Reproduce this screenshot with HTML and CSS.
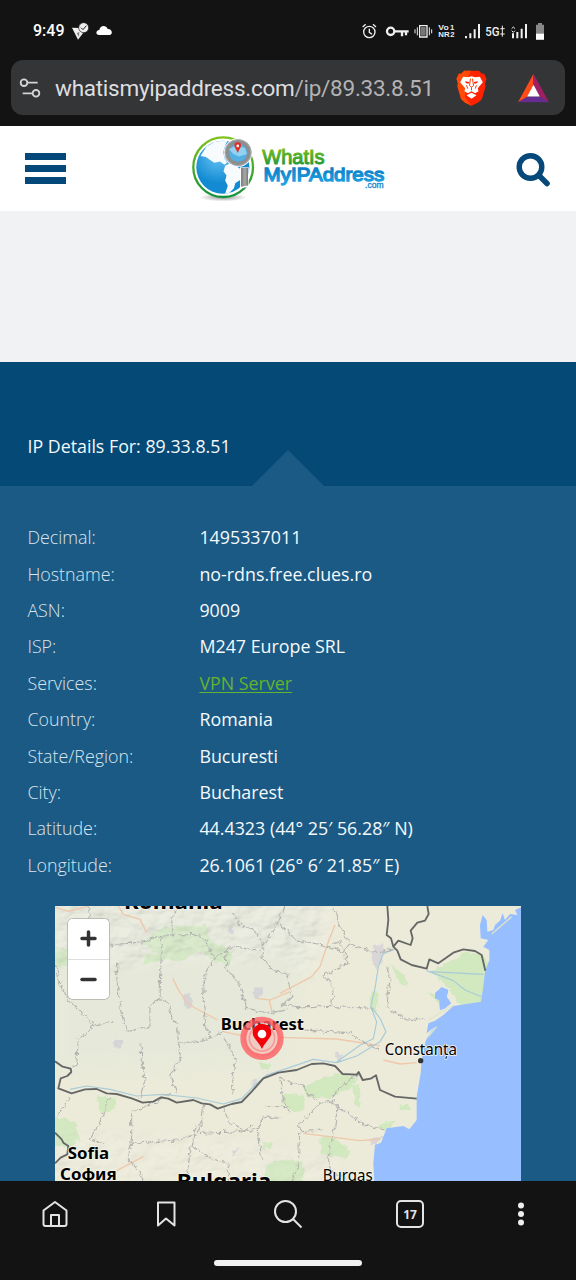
FILE: index.html
```html
<!DOCTYPE html>
<html lang="en">
<head>
<meta charset="utf-8">
<title>IP Details</title>
<link rel="stylesheet" href="styles.css">
</head>
<body>
<div class="phone">
  <header class="chrome">
    <div class="status">
      <span class="clock">9:49</span>
      <svg class="status-left" viewBox="210 60 135 66"><path d="M216 83L238 84 250 98 234 119Z" fill="#eee"/><path d="M230 100l8-5-1 16z" fill="#888"/><circle cx="251" cy="83" r="15" fill="#eee" stroke="#131313" stroke-width="2"/><path d="M243 83l6 6 10-12" fill="none" stroke="#222" stroke-width="3"/><path d="M297 105c-10 0-11-14 1-15 2-14 20-16 25-3 14-2 17 18 5 18z" fill="#fff"/></svg>
      <svg class="status-right" viewBox="219 60 555 66" fill="none" stroke="#f0f0f0">
        <circle cx="244" cy="96" r="17" stroke-width="4"/><path d="M244 86v11l8 6M224 81l9-8M264 81l-9-8" stroke-width="4"/>
        <circle cx="308" cy="94" r="11" stroke-width="7"/><path d="M319 94h43M342 94v15M354 94v12" stroke-width="7"/>
        <path d="M395 77h22v34h-22z" stroke-width="4"/><path d="M399 81h14v26h-14z" fill="#777" stroke="none"/><path d="M388 82v24M381 88v12M424 82v24M431 88v12" stroke-width="3"/>
        <g fill="#eee" stroke="none" class="tiny"><text x="451" y="91" textLength="31" lengthAdjust="spacingAndGlyphs">Vo</text><text x="486" y="89">1</text><text x="451" y="112" textLength="34" lengthAdjust="spacingAndGlyphs">NR</text><text x="487" y="112">2</text></g>
        <path d="M534 108v7M547 100v15M560 88v27M573 72v43" stroke-width="6"/>
        <text x="592" y="109" class="fiveg" fill="#eee" stroke="none" textLength="43" lengthAdjust="spacingAndGlyphs">5G</text><path d="M643 77v33M637 86h13M637 102h13" stroke-width="3"/>
        <path d="M675 100v15M688 96v19M701 86v29M714 72v43" stroke-width="6"/><path d="M671 86l5-5 5 5M671 92l5 5 5-5" stroke-width="3"/>
        <path d="M744 74h6v-5h12v5h6v45h-24z" fill="#888" stroke="none"/><path d="M744 101h24v18h-24z" fill="#fff" stroke="none"/>
      </svg>
    </div>
    <div class="address">
      <svg class="tune" viewBox="57 230 66 66" fill="none" stroke="#d4d4d6" stroke-width="5.500"><circle cx="72" cy="247" r="10"/><path d="M83 247h30M68 279h28"/><circle cx="108" cy="279" r="10"/></svg>
      <span class="url">whatismyipaddress.com<span class="path">/ip/89.33.8.51</span></span>
      <svg class="brave" viewBox="504 208 92 108"><path d="M528 210h44l9 9h7l7 15-4 14 1 10-11 38-12 10-19 9-19-9-12-10-11-38 1-10-4-14 7-15h7z" fill="#ff2200"/><path d="M528 210h20l-8 18-10 60 20 27-19-9-12-10-11-38 1-10-4-14 7-15h7z" fill="#ff4a08"/><path d="M525 228l14 2 11-3 11 3 14-2 9 17-15 18 2 9-10 6-11-6-11 6-10-6 2-9-15-18zM535 284l15-8 15 8-15 10z" fill="#fff"/><path d="M530 242l13 2-2 5-7-1zM570 242l-13 2 2 5 7-1z" fill="#ff2200"/><path d="M547 234l-3 20 6 6 6-6-3-20M550 260v9M535 254l4 10M565 254l-4 10" fill="none" stroke="#ff3300" stroke-width="3"/></svg>
      <svg class="bat" viewBox="688 216 94 90"><path d="M735 218L688 304 718 287 735 252z" fill="#ff4b17"/><path d="M735 218L782 304 752 287 735 252z" fill="#9e1f63"/><path d="M688 304H782L752 287H718z" fill="#662d91"/><path d="M735 251l19 36h-38z" fill="#fff"/></svg>
    </div>
  </header>
  <div class="site">
    <svg class="burger" viewBox="0 0 41 31" fill="#04497a"><path d="M0 0h41v7H0zM0 12h41v7H0zM0 24h41v7H0z"/></svg>
    <svg class="logo" viewBox="30 25 590 205">
      <defs>
        <radialGradient id="globe" cx=".4" cy=".3"><stop offset="0" stop-color="#65c2f2"/><stop offset="1" stop-color="#138bd3"/></radialGradient>
        <linearGradient id="green" x2="0" y2="1"><stop stop-color="#7fc31c"/><stop offset="1" stop-color="#13913c"/></linearGradient>
        <linearGradient id="blue" x2="0" y2="1"><stop stop-color="#0876be"/><stop offset="1" stop-color="#20a6e6"/></linearGradient>
        <linearGradient id="steel"><stop stop-color="#777"/><stop offset=".55" stop-color="#aaa"/><stop offset="1" stop-color="#777"/></linearGradient>
        <radialGradient id="shade"><stop stop-color="#999"/><stop offset="1" stop-color="#fff"/></radialGradient>
      </defs>
      <ellipse cx="128" cy="213" rx="72" ry="12" fill="url(#shade)"/>
      <circle cx="128" cy="122" r="90" fill="#fff" stroke="url(#green)" stroke-width="7"/>
      <circle cx="127" cy="122" r="80" fill="url(#globe)"/>
      <path d="M60 88l18-28 25-15 38-4-9 22-4 14 5 20 7 12-8 6-14-10-16 4-12-8-14-10zM134 118l12-6 19 3 11 10 20 5-7 25-24 15-5 16-14 14-12 2 8-24-8-16 4-15-9-13z" fill="#f7fbfd"/>
      <path d="M179 122h26v59l-26 5z" fill="#fff"/><path d="M182 124h21v53l-21 4z" fill="url(#steel)"/>
      <circle cx="173" cy="78" r="43" fill="#fff"/><circle cx="173" cy="78" r="34" fill="#52b0e4" stroke="#8c8e90" stroke-width="13"/><circle cx="173" cy="78" r="39" fill="none" stroke="#bbb" stroke-width="2"/>
      <path d="M145 68l22-11 27 7 6 18-24 8-17-8z" fill="#d6eff9" opacity=".5"/><path d="M172 79c-6-14-10-16-10-22a10 10 0 0120 0c0 6-4 9-10 22z" fill="#e22c25"/><circle cx="172" cy="58" r="4" fill="#fff"/>
      <g class="logo-type"><text x="246" y="113" font-size="60" textLength="188" lengthAdjust="spacingAndGlyphs" fill="url(#green)" stroke="url(#green)" stroke-width="3">WhatIs</text><text x="250" y="163" font-size="58" textLength="364" lengthAdjust="spacingAndGlyphs" fill="url(#blue)" stroke="url(#blue)" stroke-width="4">MyIPAddress</text><text x="556" y="186" font-size="25" textLength="56" lengthAdjust="spacingAndGlyphs" fill="#168acb" stroke="#168acb">.com</text></g>
    </svg>
    <svg class="find" viewBox="0 0 34 34" fill="none" stroke="#04497a"><circle cx="14.500" cy="14" r="11.300" stroke-width="5.400"/><path d="M23 22.500l8 8" stroke-width="5.500" stroke-linecap="round"/></svg>
  </div>
  <div class="ad-space"></div>
  <div class="details-head"><h1>IP Details For: 89.33.8.51</h1></div>
  <main class="details">
    <dl>
      <dt>Decimal:</dt><dd>1495337011</dd>
      <dt>Hostname:</dt><dd>no-rdns.free.clues.ro</dd>
      <dt>ASN:</dt><dd>9009</dd>
      <dt>ISP:</dt><dd>M247 Europe SRL</dd>
      <dt>Services:</dt><dd><a href="#">VPN Server</a></dd>
      <dt>Country:</dt><dd>Romania</dd>
      <dt>State/Region:</dt><dd>Bucuresti</dd>
      <dt>City:</dt><dd>Bucharest</dd>
      <dt>Latitude:</dt><dd>44.4323 (44° 25′ 56.28″ N)</dd>
      <dt>Longitude:</dt><dd>26.1061 (26° 6′ 21.85″ E)</dd>
    </dl>
    <div class="map">
      <svg class="map-art" viewBox="15 18 1398 825">
        <defs>
          <filter id="rough" x="-5%" y="-5%" width="110%" height="110%"><feTurbulence type="fractalNoise" baseFrequency=".06" numOctaves="2" seed="4"/><feDisplacementMap in="SourceGraphic" scale="20" xChannelSelector="R" yChannelSelector="G"/></filter>
          <filter id="relief" x="0" y="0" width="100%" height="100%"><feTurbulence type="fractalNoise" baseFrequency=".014 .02" numOctaves="3" seed="8"/><feDiffuseLighting surfaceScale="14" diffuseConstant="1.15" lighting-color="#eee" result="l"><feDistantLight azimuth="230" elevation="55"/></feDiffuseLighting><feComposite in="l" in2="SourceAlpha" operator="in"/></filter>
          <filter id="soft"><feGaussianBlur stdDeviation="22"/></filter>
          <mask id="hills"><g filter="url(#soft)" fill="#fff"><path d="M0 0H830V130L770 240 690 170 560 180 430 180 210 200 0 200z"/><path d="M0 680L240 710 500 710 860 770 900 850H0z" opacity=".5"/></g></mask>
        </defs>
        <path d="M0 0h1420v850H0z" fill="#ecebda"/>
        <path d="M0 0H800L700 500 0 520z" fill="#e4e8d9" opacity=".65" filter="url(#soft)"/>
        <g filter="url(#rough)" fill="#cce8b9" opacity=".8">
          <path d="M340 80L470 75 480 120 550 155 530 200 490 180 450 150 390 185 350 175 280 195 285 165 320 160 275 130z"/>
          <path d="M15 150l50-5 10 50-60 10zM140 590h60l-10 40-40 10zM15 650l60 15 15 50-30 30-45-10zM650 792l60-15 50 10v65H640z"/>
          <path d="M755 565l60-30 50-15 60 15-20 30-70 30-60-5zM700 580l60 5 5 45-30 10-35-30zM910 555h20v70l-16-10zM810 710h30l55 30v35l-80-10zM1050 615h30v15h-30zM970 680l70-20-30 30zM630 485l30 5-5 25-25-8zM640 725l28 5-5 20-25-4z"/>
          <path d="M1020 190l45 40 5 30-20-10zM1140 215L1195 185 1250 155 1300 165 1325 220 1310 312 1230 318 1205 270zM1130 275l60 20-25 12zM965 270l20 10-5 60-20-10z"/>
        </g>
        <path d="M0 0h1420v850H0z" filter="url(#relief)" mask="url(#hills)" opacity=".25"/>
        <g filter="url(#rough)" fill="#c5c2d6" opacity=".5"><circle cx="203" cy="432" r="14"/><path d="M400 285l20-10 7 40-15 15-12-20zM610 265l32-8-5 30-25 12zM535 85h15v18h-15zM540 755l30-15-20 30zM970 140l30-10v50l-25 30-10-40zM600 545l30-10-15 30zM855 460l20 2-5 30zM960 715l40-10-10 25-25 5z"/></g>
        <g fill="none" stroke="#efc8aa" stroke-width="4" stroke-linejoin="round">
          <path d="M15 22l40 12 60-15M205 18l15 25 50 15 20 40M368 235l20 40 30 40 85 45M520 395l55 12M690 412l170 5 130 20M690 280l95-50 25-30 25-75 20-50M620 295l40 5 60-25M658 300l8 38M760 700l170 22 60-5M1000 480l50 12 50-4M200 812l80-42"/>
        </g>
        <g fill="none" stroke="#a9cbd8" stroke-width="3.500" stroke-linejoin="round"><path d="M60 568L110 558 180 568 260 588 340 583 440 594 520 612 575 596 610 560 650 525 720 502 790 478 860 488 920 468 990 425 1008 395 990 355 962 319 975 265 985 200 1000 160 1033 148M860 486l70-50 40-20 10-50-18-47M1130 212L1210 242 1245 270 1295 290M1140 215l160 8"/></g>
        <path d="M1413 22L1395 30 1402 45 1380 42 1365 60 1358 40 1350 62 1335 75 1330 90 1312 95 1310 60 1298 45 1290 75 1292 115 1315 120 1300 140 1318 150 1318 180 1305 215 1300 260 1293 305 1210 318 1180 345 1155 362 1135 370 1130 400 1155 380 1140 400 1127 422 1115 480 1112 520 1100 590 1100 660 1078 688 1060 678 1010 685 993 728 975 735 970 790 973 850 1420 850V20zM1155 280l20-18 20 8-5 20 13 20-18 15-15 5-2-30-13-5z" fill="#97beff"/>
        <path d="M1155 280l20-18 20 8-5 20 13 20-18 15-15 5-2-30-13-5z" fill="#97beff"/>
        <path d="M1325 102l60-52M1135 360l75-45M1135 410l25-30" fill="none" stroke="#dfe5ca" stroke-width="4"/>
        <g filter="url(#rough)" fill="none" stroke="#b3b4b0" stroke-width="3.500" stroke-dasharray="20 3">
          <path d="M115 18l5 40 60 5M370 105l-5-50 20-37M180 135l105-10 50-20 115-2 28 35 14 38 50-35 90 10M335 105l-5 185-30 30 0 60-70 15-20-70-10-100 0-40M320 295l35 15 10 40 18 30 2 50 75-10 30-10 35-20 10-5M490 180l-25 40-5 80 8 90 22 25M530 140l0 65 40 50 20 70 60 15 60-10M550 40l15 30 50 25 25 40-5 40 30 30 50 25M640 135l45-70 20-47M15 190l15 60 25 50 80 75 60-10M135 375l-50 40-5 80-20 10M270 430l15 110-15 55M385 430l10 45-35 50 20 55M520 410l35 65-10 110"/>
          <path d="M690 75l50 45 80 15 60 20 20-25-35-60-15-50M850 130l20-5 25 65-75 35 30 35-5 60-100 0-45-5M900 130l70 28 60-10M1010 200l10 40-10 80 60 40 60-5M850 320l120 5M710 220l15 70-30 30M760 390l140 8 20 20 70 30M930 520l-60 40-30 45 60 40 45 30 60 15M690 535l60 20 60 55 45-10M810 610l-60 60-5 120-20 60M865 615l-10 60-20 90 10 50 50 20M750 695l70-5"/>
          <path d="M175 590l-15 60-40 65 40 15M60 590l-40 60M245 640l0 70-10 70 40 40 0 40M245 635l55-20 60-35M245 730l130-10 70-20 20-90M440 680l-20 70-10 90M430 740l50 35 55 15 0 55M520 620l15 45 60 30 30-10 15-35 50 5M650 620l70 0M625 690l10 90M450 700l120-5 40-20M690 540l10 60 20 40"/>
        </g>
        <g fill="none" stroke="#646765" stroke-width="5.500" stroke-linejoin="round">
          <path d="M15 484L38 500 62 506 64 516 52 528 32 535 25 565 65 580 105 568 140 567 170 580 200 582 245 595 278 608 310 605 333 592 355 596 380 608 430 600 455 610 480 613 503 626 545 612 575 606 605 575 640 535 685 518 740 510 785 492 820 490 855 498 878 522 920 524 926 516 938 540 962 536 978 526 990 570 1035 590 1100 596"/>
          <path d="M1012 18L1015 60 1010 105 1023 115 1030 140 1042 152 1052 178 1085 195 1130 206 1138 178 1165 190 1210 158 1240 148 1275 153 1295 165 1306 212M1030 140L1045 122 1082 135 1088 115 1082 92 1102 68 1125 62 1136 42 1132 18"/>
          <path d="M15 698l20 20 5 10 15 10-3 25-20 10-17 17"/>
        </g>
        <g class="map-label" fill="#000"><text x="222" y="28" class="bold" font-size="65" textLength="296" lengthAdjust="spacingAndGlyphs">Romania</text><text x="512" y="391" class="bold" font-size="50" textLength="250" lengthAdjust="spacingAndGlyphs">Bucharest</text><text x="1004" y="465" font-size="47" textLength="217" lengthAdjust="spacingAndGlyphs">Constanța</text><text x="53" y="778" class="bold" font-size="50" textLength="124" lengthAdjust="spacingAndGlyphs">Sofia</text><text x="30" y="840" class="bold" font-size="50" textLength="170" lengthAdjust="spacingAndGlyphs">София</text><text x="380" y="867" class="bold" font-size="65" textLength="284" lengthAdjust="spacingAndGlyphs">Bulgaria</text><text x="818" y="843" font-size="47" textLength="150" lengthAdjust="spacingAndGlyphs">Burgas</text></g>
        <circle cx="1112" cy="482" r="8" fill="#333"/>
        <g><circle cx="636" cy="415" r="56" fill="#f99" opacity=".35"/><circle cx="636" cy="415" r="56" fill="none" stroke="#ff5659" stroke-width="18" opacity=".75"/><circle cx="636" cy="415" r="38" fill="none" stroke="#f77" stroke-width="5" opacity=".6"/><path d="M636 447c-9-20-28-34-28-48a28 28 0 0156 0c0 14-19 28-28 48z" fill="#f30008"/><circle cx="636" cy="402" r="13" fill="#fff"/></g>
      </svg>
      <div class="zoom"><button><svg viewBox="0 0 17 17"><path d="M8.5 2v13M2 8.5h13"/></svg></button><button><svg viewBox="0 0 17 17"><path d="M2 8.5h13"/></svg></button></div>
    </div>
  </main>
  <nav class="bottom">
    <div class="tools">
      <svg viewBox="0 0 32 32"><path d="M4.500 12.500L16 4l11.500 8.500V26a2 2 0 01-2 2h-19a2 2 0 01-2-2zM12 28V17h8v11"/></svg>
      <svg viewBox="0 0 32 32"><path d="M8 4.500h16.500v23L16 20.500 8 27.500z"/></svg>
      <svg viewBox="0 0 32 32"><circle cx="13.500" cy="13.500" r="10.500"/><path d="M21 21l8.500 8.500"/></svg>
      <svg viewBox="0 0 32 32"><rect x="3" y="3" width="26" height="26" rx="4"/><text x="16" y="20.500" text-anchor="middle">17</text></svg>
      <svg viewBox="0 0 32 32" class="dots"><circle cx="16" cy="7.500" r="3"/><circle cx="16" cy="16" r="3"/><circle cx="16" cy="24.500" r="3"/></svg>
    </div>
    <div class="home-bar"></div>
  </nav>
</div>
</body>
</html>
```
FILE: styles.css
```css
* { box-sizing: border-box; }
body { margin: 0; font-family: "Open Sans", sans-serif; }
.phone { width: 576px; height: 1280px; overflow: hidden; display: flex; flex-direction: column; background: #1b5a84; }
.chrome { height: 126px; flex: none; background: #131313; padding: 0 11px; }
.status { height: 60px; padding: 20px 19px 0 22px; display: flex; align-items: flex-start; }
.clock { width: 37px; font: 500 16px/22px Roboto, sans-serif; color: #fff; }
.status-left { width: 45px; height: 22px; }
.status-right { width: 185px; height: 22px; margin-left: auto; }
.tiny { font: bold 23px "Liberation Sans", sans-serif; }
.fiveg { font: 500 36px Roboto, sans-serif; }
.address { height: 55px; border-radius: 12px; background: #343537; display: flex; align-items: center; padding: 0 16px 0 8px; }
.tune { width: 22px; height: 22px; }
.url { margin-left: 14px; width: 401px; font: 22.500px/30px Roboto, sans-serif; letter-spacing: -.26px; color: #dedee0; white-space: nowrap; }
.path { color: #b3b3b5; }
.brave { width: 31px; height: 36px; }
.bat { width: 31px; height: 30px; margin-left: auto; }
.site { height: 85px; flex: none; background: #fff; display: flex; align-items: center; padding: 0 26px 0 25px; }
.burger { width: 41px; height: 31px; }
.logo { width: 197px; height: 68px; margin-left: 124px; }
.logo-type { font-family: "Liberation Sans", sans-serif; }
.find { width: 34px; height: 34px; margin: 2px 0 0 auto; }
.ad-space { height: 151px; flex: none; background: #f1f2f4; }
.details-head { height: 124px; flex: none; background: #054a77; padding: 72px 27.500px 0; position: relative; }
.details-head h1 { margin: 0; font-size: 17.800px; line-height: 25px; font-weight: 400; color: #f4f8fb; }
.details-head::after { content: ""; position: absolute; left: 251px; bottom: -1px; border: 37px solid transparent; border-top: 0; border-bottom-color: #1b5a84; }
.details { flex: 1; min-height: 0; background: #1b5a84; overflow: hidden; padding: 33.300px 55px 0; }
dl { margin: 0 0 22.700px -27.600px; display: grid; grid-template-columns: 172px 1fr; grid-auto-rows: 36.400px; font-size: 17.830px; line-height: 36.400px; white-space: nowrap; }
dt { font-weight: 300; color: #d9e6ef; }
dd { margin: 0; color: #f5f9fc; }
dd a { color: #65b32e; text-decoration-thickness: 1px; text-underline-offset: 2px; }
.map { width: 466px; height: 275px; position: relative; overflow: hidden; }
.map-art { width: 466px; height: 275px; display: block; }
.map-label { font-family: "Noto Sans", sans-serif; paint-order: stroke; stroke: #f4f4ec; stroke-width: 5px; stroke-linejoin: round; }
.bold { font-weight: 700; }
.zoom { position: absolute; left: 13px; top: 13px; width: 41px; border-radius: 5px; background: #fff; box-shadow: 0 0 0 1px #bbbdb5; overflow: hidden; }
.zoom button { display: grid; place-items: center; width: 41px; height: 40px; padding: 0; border: 0; background: #fff; }
.zoom button + button { border-top: 1px solid #ddd; }
.zoom svg { width: 17px; height: 17px; stroke: #333; stroke-width: 3.500px; stroke-linecap: round; }
.bottom { height: 99px; flex: none; background: #131313; }
.tools { height: 79px; padding: 17px 39px 0; display: grid; grid-template-columns: 111px 122px 122px 111px 32px; }
.tools svg { width: 32px; height: 32px; fill: none; stroke: #e4e4e4; stroke-width: 2px; stroke-linejoin: round; }
.tools text { font: 700 12px "Noto Sans", sans-serif; fill: #e4e4e4; stroke: none; }
.tools .dots { fill: #eee; stroke: none; }
.home-bar { width: 148px; height: 6px; border-radius: 3px; background: #f1f1f1; margin: 0 auto; }
```
